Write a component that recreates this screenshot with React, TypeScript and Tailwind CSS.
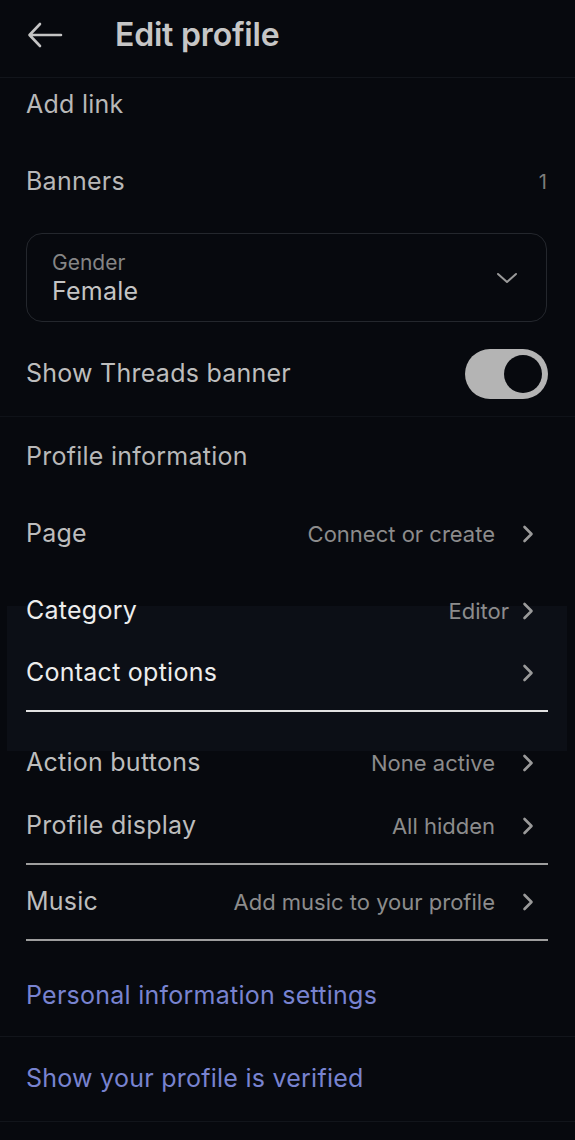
import React, { useState } from "react";

const font = { fontFamily: "Inter, 'Noto Sans', sans-serif" };

const Chevron = () => (
  <svg width="12" height="18" viewBox="0 0 12 18" className="shrink-0">
    <path d="M2.5 2 L9.5 9 L2.5 16" fill="none" stroke="#9a9a9a" strokeWidth="2.6" strokeLinecap="round" strokeLinejoin="round" />
  </svg>
);

interface Row {
  label: string;
  value?: string;
  h: string;
  bright?: boolean;
  extra?: string;
}

const NavRow = ({ label, value, h, bright, extra }: Row) => (
  <div className={`relative flex items-center justify-between pl-[26px] pr-[41px] ${h} ${extra || ""}`}>
    <span className={`text-[25px] tracking-[0.25px] ${bright ? "text-[#ededed]" : "text-[#bdbdbd]"}`}>{label}</span>
    <div className="flex items-center">
      {value && (
        <span className={`text-[22px] text-[#8c8c8c] ${value === "Editor" ? "mr-[13px]" : "mr-[27px]"}`}>
          {value}
        </span>
      )}
      <Chevron />
    </div>
  </div>
);

export default function App() {
  const [showBanner, setShowBanner] = useState(true);

  return (
    <div className="w-[575px] min-h-[1140px] bg-[#07090e] overflow-hidden" style={font}>
      {/* Header */}
      <div className="flex items-center h-[78px] px-[27px] pb-[8px] border-b border-[#12151b]">
        <svg width="36" height="28" viewBox="0 0 36 28">
          <path d="M34 14 H3 M13 3 L2.5 14 L13 25" fill="none" stroke="#c4c4c4" strokeWidth="2.6" strokeLinecap="round" strokeLinejoin="round" />
        </svg>
        <h1 className="ml-[52px] text-[32px] font-semibold text-[#c6c6c6] tracking-[-0.2px]">Edit profile</h1>
      </div>

      <div className="flex items-center h-[54px] px-[26px]">
        <span className="text-[25px] tracking-[0.25px] text-[#b8b8b8]">Add link</span>
      </div>

      <div className="flex items-center justify-between h-[100px] pl-[26px] pr-[28px]">
        <span className="text-[25px] tracking-[0.25px] text-[#b8b8b8]">Banners</span>
        <span className="text-[20px] text-[#7c7c7c]">1</span>
      </div>

      {/* Gender select */}
      <div className="mt-[1px] ml-[26px] mr-[28px] h-[89px] rounded-[16px] border border-[#24272d] flex items-center justify-between pl-[25px] pr-[28px]">
        <div className="flex flex-col leading-none">
          <span className="text-[21px] text-[#858585]">Gender</span>
          <span className="mt-[6px] text-[25px] tracking-[0.25px] text-[#c4c4c4]">Female</span>
        </div>
        <svg width="22" height="12" viewBox="0 0 22 12">
          <path d="M2 2 L11 10 L20 2" fill="none" stroke="#9a9a9a" strokeWidth="2" strokeLinecap="round" strokeLinejoin="round" />
        </svg>
      </div>

      <div className="mt-[12px] flex items-center justify-between h-[80px] pl-[26px] pr-[27px]">
        <span className="text-[25px] tracking-[0.25px] text-[#bdbdbd]">Show Threads banner</span>
        <button
          onClick={() => setShowBanner(!showBanner)}
          className={`w-[83px] h-[50px] rounded-full bg-[#b4b4b4] flex items-center px-[6px] ${showBanner ? "justify-end" : "justify-start"}`}
        >
          <span className="block w-[38px] h-[38px] rounded-full bg-[#07090e]" />
        </button>
      </div>
      <div className="mt-[2px] h-px bg-[#0f1218]" />

      <div className="flex items-center h-[80px] px-[26px]">
        <span className="text-[25px] tracking-[0.25px] text-[#b8b8b8]">Profile information</span>
      </div>

      <NavRow label="Page" value="Connect or create" h="h-[74px]" />

      <div className="relative">
        {/* highlighted block */}
        <div className="absolute top-[26px] left-[7px] right-[8px] h-[145px] bg-[#0c0f16]" />
        <NavRow label="Category" value="Editor" h="h-[62px]" bright extra="mt-[9px]" />
        <NavRow label="Contact options" h="h-[62px]" bright />
        <div className="relative mt-[6px] ml-[26px] mr-[27px] h-[2px] bg-[#e2e2e2]" />
        <NavRow label="Action buttons" value="None active" h="h-[62px]" extra="mt-[20px]" />
        <NavRow label="Profile display" value="All hidden" h="h-[64px]" />
        <div className="mt-[5px] ml-[26px] mr-[27px] h-[2px] bg-[#9e9e9e]" />
        <NavRow label="Music" value="Add music to your profile" h="h-[74px]" />
        <div className="ml-[26px] mr-[27px] h-[2px] bg-[#9e9e9e]" />

        <div className="mt-[15px] flex items-center h-[80px] px-[26px]">
          <span className="text-[25px] tracking-[0.25px] text-[#7883d0]">Personal information settings</span>
        </div>
        <div className="h-px bg-[#12151b]" />
        <div className="flex items-center h-[84px] px-[26px]">
          <span className="text-[25px] tracking-[0.25px] text-[#7883d0]">Show your profile is verified</span>
        </div>
        <div className="h-px bg-[#12151b]" />
      </div>
    </div>
  );
}
